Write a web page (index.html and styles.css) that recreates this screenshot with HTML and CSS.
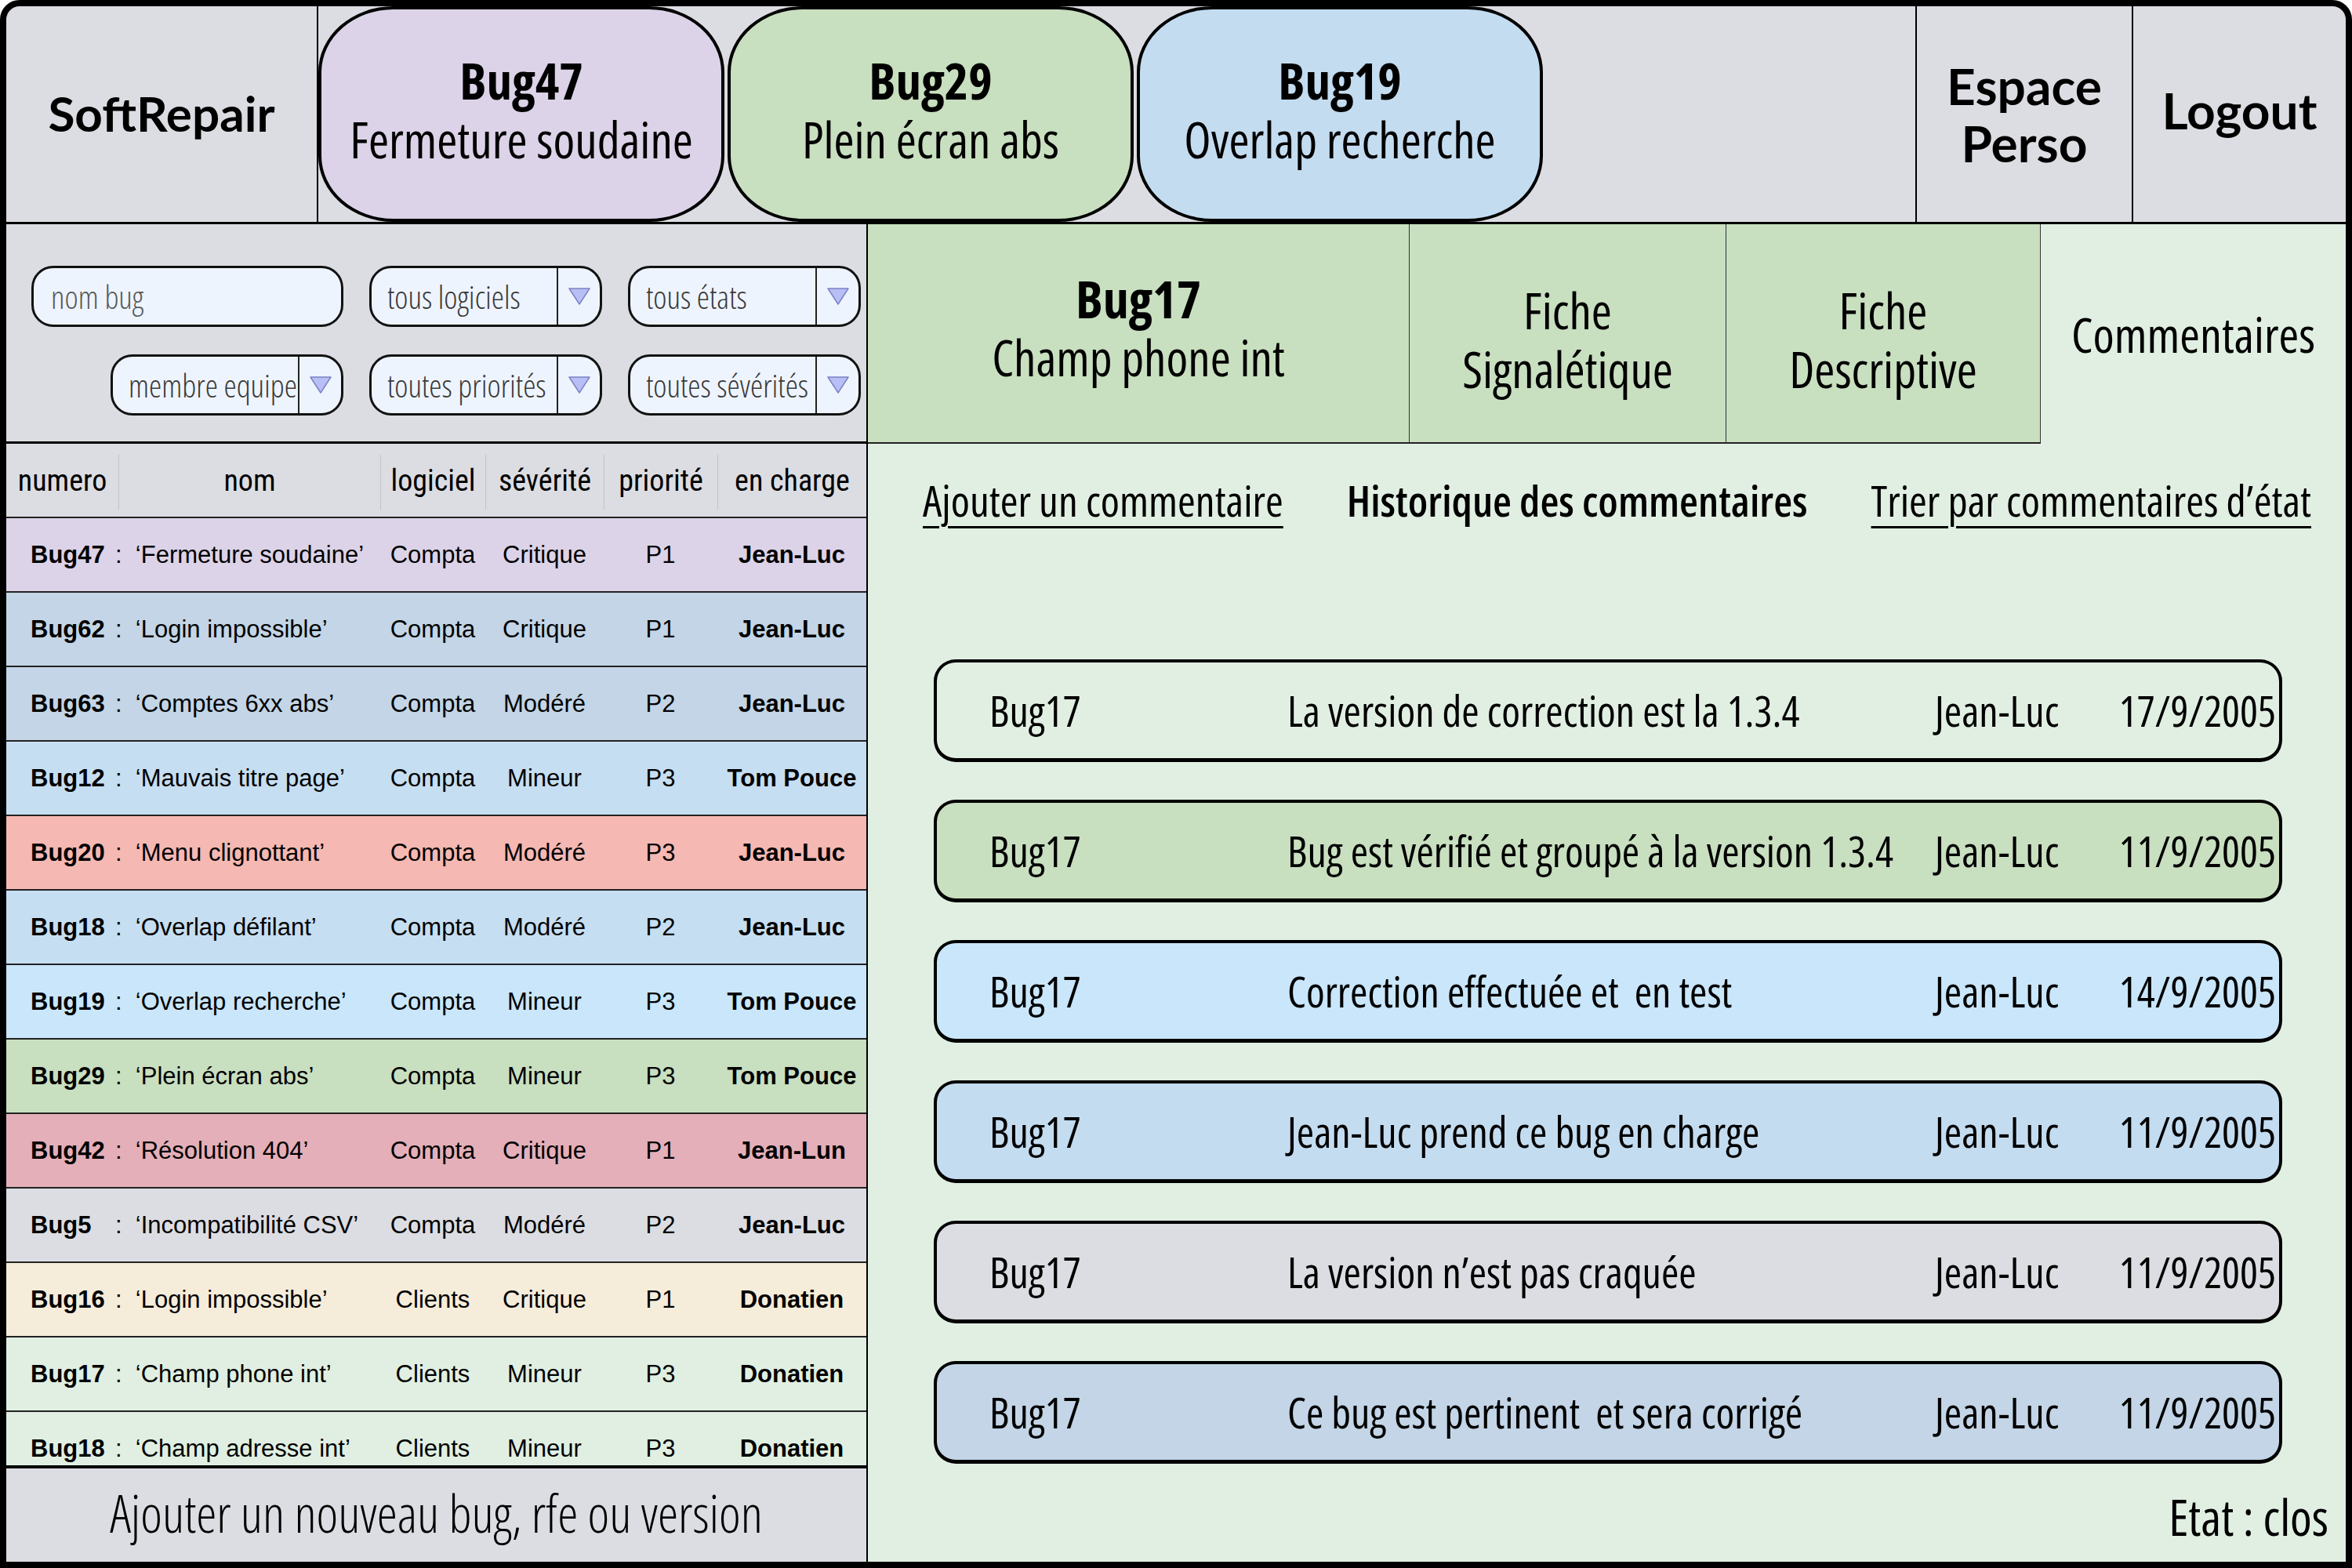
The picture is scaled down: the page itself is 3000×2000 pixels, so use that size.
FILE: index.html
```html
<!DOCTYPE html>
<html lang="fr">
<head>
  <meta charset="UTF-8" />
  <title>SoftRepair</title>
  <link rel="stylesheet" href="styles.css">
</head>
<body>

<div class="screen">

  <header class="topbar">
    <div class="brand">SoftRepair</div>
    <div class="open-bugs">
      <div class="bug-tab lavender"><b>Bug47</b><span>Fermeture soudaine</span></div>
      <div class="bug-tab green"><b>Bug29</b><span>Plein écran abs</span></div>
      <div class="bug-tab blue"><b>Bug19</b><span>Overlap recherche</span></div>
    </div>
    <div class="head-link perso">Espace<br>Perso</div>
    <div class="head-link logout">Logout</div>
  </header>

  <main class="workspace">

    <!-- liste des bugs -->
    <section class="bug-list">
      <div class="filters">
        <div class="field text-field">nom bug</div>
        <div class="field select">
          <span class="select-label">tous logiciels</span>
          <span class="select-btn"><svg viewBox="0 0 30 24"><path d="M2 2 H28 L15 22 Z" /></svg></span>
        </div>
        <div class="field select">
          <span class="select-label">tous états</span>
          <span class="select-btn"><svg viewBox="0 0 30 24"><path d="M2 2 H28 L15 22 Z" /></svg></span>
        </div>
        <div class="field select member">
          <span class="select-label">membre equipe</span>
          <span class="select-btn"><svg viewBox="0 0 30 24"><path d="M2 2 H28 L15 22 Z" /></svg></span>
        </div>
        <div class="field select">
          <span class="select-label">toutes priorités</span>
          <span class="select-btn"><svg viewBox="0 0 30 24"><path d="M2 2 H28 L15 22 Z" /></svg></span>
        </div>
        <div class="field select">
          <span class="select-label">toutes sévérités</span>
          <span class="select-btn"><svg viewBox="0 0 30 24"><path d="M2 2 H28 L15 22 Z" /></svg></span>
        </div>
      </div>

      <div class="table-head">
        <span class="col-num">numero</span>
        <span class="col-name">nom</span>
        <span>logiciel</span>
        <span>sévérité</span>
        <span>priorité</span>
        <span>en charge</span>
      </div>

      <div class="rows">
        <div class="row lavender"><span class="title"><b>Bug47</b>: &nbsp;‘Fermeture soudaine’</span><span>Compta</span><span>Critique</span><span>P1</span><b>Jean-Luc</b></div>
        <div class="row steel"><span class="title"><b>Bug62</b>: &nbsp;‘Login impossible’</span><span>Compta</span><span>Critique</span><span>P1</span><b>Jean-Luc</b></div>
        <div class="row steel"><span class="title"><b>Bug63</b>: &nbsp;‘Comptes 6xx abs’</span><span>Compta</span><span>Modéré</span><span>P2</span><b>Jean-Luc</b></div>
        <div class="row sky"><span class="title"><b>Bug12</b>: &nbsp;‘Mauvais titre page’</span><span>Compta</span><span>Mineur</span><span>P3</span><b>Tom Pouce</b></div>
        <div class="row salmon"><span class="title"><b>Bug20</b>: &nbsp;‘Menu clignottant’</span><span>Compta</span><span>Modéré</span><span>P3</span><b>Jean-Luc</b></div>
        <div class="row sky"><span class="title"><b>Bug18</b>: &nbsp;‘Overlap défilant’</span><span>Compta</span><span>Modéré</span><span>P2</span><b>Jean-Luc</b></div>
        <div class="row light-blue"><span class="title"><b>Bug19</b>: &nbsp;‘Overlap recherche’</span><span>Compta</span><span>Mineur</span><span>P3</span><b>Tom Pouce</b></div>
        <div class="row green"><span class="title"><b>Bug29</b>: &nbsp;‘Plein écran abs’</span><span>Compta</span><span>Mineur</span><span>P3</span><b>Tom Pouce</b></div>
        <div class="row rose"><span class="title"><b>Bug42</b>: &nbsp;‘Résolution 404’</span><span>Compta</span><span>Critique</span><span>P1</span><b>Jean-Lun</b></div>
        <div class="row grey"><span class="title"><b>Bug5</b>: &nbsp;‘Incompatibilité CSV’</span><span>Compta</span><span>Modéré</span><span>P2</span><b>Jean-Luc</b></div>
        <div class="row cream"><span class="title"><b>Bug16</b>: &nbsp;‘Login impossible’</span><span>Clients</span><span>Critique</span><span>P1</span><b>Donatien</b></div>
        <div class="row mint"><span class="title"><b>Bug17</b>: &nbsp;‘Champ phone int’</span><span>Clients</span><span>Mineur</span><span>P3</span><b>Donatien</b></div>
        <div class="row mint"><span class="title"><b>Bug18</b>: &nbsp;‘Champ adresse int’</span><span>Clients</span><span>Mineur</span><span>P3</span><b>Donatien</b></div>
      </div>

      <div class="add-bug">Ajouter un nouveau bug, rfe ou version</div>
    </section>

    <!-- detail du bug -->
    <section class="bug-detail">
      <nav class="detail-tabs">
        <div class="detail-tab current-bug"><b>Bug17</b><span>Champ phone int</span></div>
        <div class="detail-tab sheet">Fiche<br>Signalétique</div>
        <div class="detail-tab sheet">Fiche<br>Descriptive</div>
        <div class="detail-tab active">Commentaires</div>
      </nav>

      <div class="comment-links">
        <a href="#">Ajouter un commentaire</a>
        <strong>Historique des commentaires</strong>
        <a href="#">Trier par commentaires d’état</a>
      </div>

      <div class="comments">
        <div class="comment plain"><span>Bug17</span><span>La version de correction est la 1.3.4</span><span>Jean-Luc</span><span class="date">17/9/2005</span></div>
        <div class="comment green"><span>Bug17</span><span>Bug est vérifié et groupé à la version 1.3.4</span><span>Jean-Luc</span><span class="date">11/9/2005</span></div>
        <div class="comment light-blue"><span>Bug17</span><span>Correction effectuée et &nbsp;en test</span><span>Jean-Luc</span><span class="date">14/9/2005</span></div>
        <div class="comment blue"><span>Bug17</span><span>Jean-Luc prend ce bug en charge</span><span>Jean-Luc</span><span class="date">11/9/2005</span></div>
        <div class="comment grey"><span>Bug17</span><span>La version n’est pas craquée</span><span>Jean-Luc</span><span class="date">11/9/2005</span></div>
        <div class="comment steel"><span>Bug17</span><span>Ce bug est pertinent &nbsp;et sera corrigé</span><span>Jean-Luc</span><span class="date">11/9/2005</span></div>
      </div>

      <div class="state">Etat : clos</div>
    </section>

  </main>
</div>

</body>
</html>
```

FILE: styles.css
```css
* {
  box-sizing: border-box;
}

html, body {
  margin: 0;
  padding: 0;
  background: #fff;
}

body {
  font-family: "Open Sans", "Liberation Sans", sans-serif;
  font-stretch: 75%;
  color: #000;
}

.screen {
  width: 3000px;
  height: 2000px;
  border: 8px solid #000;
  border-radius: 25px 25px 0 0;
  background: #dcdde2;
  display: flex;
  flex-direction: column;
  overflow: hidden;
}

/* couleurs */
.lavender { background: #dcd3e8; }
.green { background: #c8dfc0; }
.blue { background: #c4dcf0; }
.steel { background: #c3d5e6; }
.sky { background: #c6def1; }
.light-blue { background: #c9e6fa; }
.salmon { background: #f5b8b2; }
.rose { background: #e4afb8; }
.grey { background: #dcdde2; }
.cream { background: #f5ecda; }
.mint { background: #e0efe2; }

/* Header */
.topbar {
  height: 278px;
  flex: none;
  display: flex;
  border-bottom: 3px solid #000;
}

.brand {
  width: 398px;
  border-right: 2px solid #000;
  display: flex;
  align-items: center;
  justify-content: center;
  font-family: "Lato", "Liberation Sans", sans-serif;
  font-stretch: normal;
  font-weight: 700;
  font-size: 62px;
  padding-bottom: 4px;
}

.open-bugs {
  flex: 1;
  display: flex;
  gap: 4px;
}

.bug-tab {
  width: 518px;
  height: 100%;
  border: 4px solid #000;
  border-radius: 96px / 84px;
  display: flex;
  flex-direction: column;
  align-items: center;
  justify-content: center;
  line-height: 76px;
  padding-bottom: 12px;
  white-space: nowrap;
}

.bug-tab b {
  font-size: 65px;
}

.bug-tab span {
  font-size: 63px;
}

.head-link {
  width: 276px;
  border-left: 2px solid #000;
  display: flex;
  align-items: center;
  justify-content: center;
  text-align: center;
  font-family: "Lato", "Liberation Sans", sans-serif;
  font-stretch: normal;
  font-weight: 700;
  font-size: 64px;
  line-height: 73px;
}

.head-link.logout {
  width: 273px;
  padding-bottom: 10px;
}

/* Layout principal */
.workspace {
  flex: 1;
  display: flex;
  min-height: 0;
}

.bug-list {
  width: 1099px;
  flex: none;
  border-right: 2px solid #000;
  display: flex;
  flex-direction: column;
}

/* Filtres */
.filters {
  height: 280px;
  flex: none;
  border-bottom: 3px solid #000;
  display: grid;
  grid-template-columns: 398px 297px 297px;
  grid-auto-rows: 78px;
  column-gap: 33px;
  row-gap: 35px;
  padding: 53px 0 0 32px;
}

.field {
  border: 3px solid #111;
  border-radius: 28px;
  background: #eef4fd;
  font-size: 41px;
  font-weight: 300;
  color: #3a3a3a;
  display: flex;
  align-items: center;
  overflow: hidden;
}

.text-field {
  padding-left: 22px;
  color: #5a5a5a;
}

.select.member {
  grid-column: 1;
  width: 297px;
  justify-self: end;
}

.select-label {
  flex: 1;
  padding-left: 20px;
  white-space: nowrap;
  overflow: hidden;
}

.select-btn {
  width: 55px;
  height: 100%;
  flex: none;
  border-left: 2px solid #222;
  display: flex;
  align-items: center;
  justify-content: center;
}

.select-btn svg {
  width: 30px;
  height: 24px;
}

.select-btn path {
  fill: #b8bff4;
  stroke: #7b83c6;
  stroke-width: 1.5;
  stroke-linejoin: round;
}

/* Tableau */
.table-head,
.row {
  display: grid;
  grid-template-columns: 143px 334px 134px 151px 145px 1fr;
  align-items: center;
  text-align: center;
  white-space: nowrap;
}

.table-head {
  height: 95px;
  flex: none;
  border-bottom: 2px solid #222;
  font-family: "Roboto", "Liberation Sans", sans-serif;
  font-size: 38px;
  padding-top: 4px;
}

.table-head span {
  height: 70px;
  line-height: 66px;
  border-left: 1px solid #c2c3c9;
}

.table-head span.col-num {
  border-left: none;
}

.rows {
  flex: 1;
  overflow: hidden;
  min-height: 0;
}

.row {
  height: 95px;
  border-bottom: 2px solid #222;
  font-family: "Liberation Sans", sans-serif;
  font-stretch: normal;
  font-size: 31px;
}

.row .title {
  grid-column: span 2;
  text-align: left;
  padding-left: 31px;
}

.row .title b {
  display: inline-block;
  width: 108px;
}

/* Ajouter */
.add-bug {
  height: 123px;
  flex: none;
  border-top: 4px solid #000;
  display: flex;
  align-items: center;
  justify-content: center;
  font-size: 66px;
  font-weight: 300;
  padding-bottom: 8px;
}

/* Detail */
.bug-detail {
  flex: 1;
  min-width: 0;
  background: #e1efe3;
  display: flex;
  flex-direction: column;
}

.detail-tabs {
  height: 280px;
  flex: none;
  display: flex;
}

.detail-tab {
  flex: none;
  display: flex;
  flex-direction: column;
  align-items: center;
  justify-content: center;
  text-align: center;
  font-size: 63px;
  line-height: 75px;
  white-space: nowrap;
}

.current-bug,
.sheet {
  background: #c8dfc0;
  border-bottom: 2px solid #222;
  border-right: 1px solid #333;
}

.current-bug {
  width: 691px;
  padding-bottom: 14px;
}

.current-bug b {
  font-size: 66px;
}

.sheet {
  width: 404px;
  padding-top: 16px;
}

.sheet + .sheet {
  width: 401px;
}

.detail-tab.active {
  flex: 1;
  min-width: 0;
  font-size: 62px;
}

.comment-links {
  display: flex;
  justify-content: space-between;
  padding: 40px 44px 0 70px;
  font-size: 55px;
  line-height: 64px;
  white-space: nowrap;
}

.comment-links a {
  color: #000;
  text-decoration: underline;
  text-decoration-thickness: 3px;
  text-underline-offset: 12px;
}

.comment-links strong {
  font-weight: 600;
}

.comments {
  display: flex;
  flex-direction: column;
  gap: 48px;
  margin: 171px 81px 0 84px;
}

.comment {
  height: 131px;
  border: 4px solid #000;
  border-bottom-width: 5px;
  border-radius: 28px;
  display: grid;
  grid-template-columns: 380px 826px 1fr auto;
  align-items: center;
  padding: 0 4px 0 67px;
  font-size: 54px;
  white-space: nowrap;
}

.comment.plain {
  background: #e1efe3;
}

.state {
  margin-top: auto;
  text-align: right;
  padding: 0 22px 26px 0;
  font-size: 63px;
  line-height: 1;
}
```
